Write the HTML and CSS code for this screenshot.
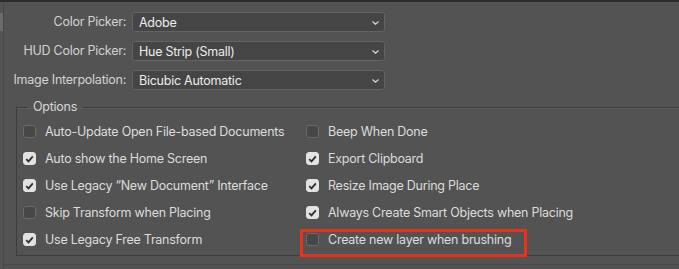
FILE: index.html
```html
<!DOCTYPE html>
<html>
<head>
<meta charset="utf-8">
<link rel="stylesheet" href="styles.css">
</head>
<body>
<div class="topline"></div>
<div class="panel">
  <div class="scrollstub"></div>
  <div class="content">
    <div class="fields">
      <label class="lbl">Color Picker:</label>
      <div class="select"><span>Adobe</span><svg class="chev" width="7" height="4" viewBox="0 0 7 4"><path d="M0.5 0.5 L3.5 3.2 L6.5 0.5" fill="none" stroke="#d8d8d8" stroke-width="1.2"/></svg></div>
      <label class="lbl">HUD Color Picker:</label>
      <div class="select"><span>Hue Strip (Small)</span><svg class="chev" width="7" height="4" viewBox="0 0 7 4"><path d="M0.5 0.5 L3.5 3.2 L6.5 0.5" fill="none" stroke="#d8d8d8" stroke-width="1.2"/></svg></div>
      <label class="lbl">Image Interpolation:</label>
      <div class="select"><span>Bicubic Automatic</span><svg class="chev" width="7" height="4" viewBox="0 0 7 4"><path d="M0.5 0.5 L3.5 3.2 L6.5 0.5" fill="none" stroke="#d8d8d8" stroke-width="1.2"/></svg></div>
    </div>
    <fieldset class="options">
      <legend>Options</legend>
      <div class="grid">
        <div class="item"><span class="box"></span>Auto-Update Open File-based Documents</div>
        <div class="item"><span class="box"></span>Beep When Done</div>
        <div class="item"><span class="box on"><svg width="9" height="8" viewBox="0 0 9 8"><path d="M1.2 4.2 L3.5 6.4 L7.8 1.4" fill="none" stroke="#2e2e2e" stroke-width="1.8"/></svg></span>Auto show the Home Screen</div>
        <div class="item"><span class="box on"><svg width="9" height="8" viewBox="0 0 9 8"><path d="M1.2 4.2 L3.5 6.4 L7.8 1.4" fill="none" stroke="#2e2e2e" stroke-width="1.8"/></svg></span>Export Clipboard</div>
        <div class="item"><span class="box on"><svg width="9" height="8" viewBox="0 0 9 8"><path d="M1.2 4.2 L3.5 6.4 L7.8 1.4" fill="none" stroke="#2e2e2e" stroke-width="1.8"/></svg></span>Use Legacy “New Document” Interface</div>
        <div class="item"><span class="box on"><svg width="9" height="8" viewBox="0 0 9 8"><path d="M1.2 4.2 L3.5 6.4 L7.8 1.4" fill="none" stroke="#2e2e2e" stroke-width="1.8"/></svg></span>Resize Image During Place</div>
        <div class="item"><span class="box"></span>Skip Transform when Placing</div>
        <div class="item"><span class="box on"><svg width="9" height="8" viewBox="0 0 9 8"><path d="M1.2 4.2 L3.5 6.4 L7.8 1.4" fill="none" stroke="#2e2e2e" stroke-width="1.8"/></svg></span>Always Create Smart Objects when Placing</div>
        <div class="item"><span class="box on"><svg width="9" height="8" viewBox="0 0 9 8"><path d="M1.2 4.2 L3.5 6.4 L7.8 1.4" fill="none" stroke="#2e2e2e" stroke-width="1.8"/></svg></span>Use Legacy Free Transform</div>
        <div class="item highlight"><span class="box"></span>Create new layer when brushing</div>
      </div>
    </fieldset>
    <div class="nextline"></div>
  </div>
</div>
</body>
</html>
```

FILE: styles.css
```css
html, body {
  margin: 0;
  padding: 0;
  background: #535353;
  overflow: hidden;
}
body {
  width: 679px;
  height: 269px;
  font-family: Inter, "Noto Sans", "Liberation Sans", sans-serif;
  font-size: 12.5px;
  letter-spacing: -0.25px;
  color: #dcdcdc;
}
.topline {
  height: 2px;
  background: #2a2a2a;
}
.panel {
  display: flex;
  height: 267px;
}
.scrollstub {
  width: 3px;
  flex: none;
  border-right: 1px solid #474747;
  position: relative;
}
.scrollstub::before {
  content: "";
  position: absolute;
  left: 0;
  top: 11px;
  width: 3px;
  height: 18px;
  background: #6b6b6b;
}
.content {
  flex: 1;
  display: flex;
  flex-direction: column;
  padding-top: 10px;
  overflow: hidden;
}
.fields {
  display: grid;
  grid-template-columns: 118px 253px;
  column-gap: 6px;
  row-gap: 9px;
  align-items: center;
  padding-left: 4px;
}
.lbl {
  text-align: right;
  color: #d2d2d2;
  white-space: nowrap;
  line-height: 20px;
}
.select {
  height: 18px;
  border: 1px solid #636363;
  border-radius: 3px;
  background: #454545;
  display: flex;
  align-items: center;
  justify-content: space-between;
  padding: 0 5px 0 6px;
  color: #ececec;
}
.chev {
  margin-top: 1px;
}
.options {
  margin: 9px -40px 0 12px;
  padding: 3px 0 2px 6px;
  border: 0;
  border-top: 1px solid #3d3d3d;
  border-left: 1px solid #3d3d3d;
  border-bottom: 1px solid #3d3d3d;
  box-shadow: inset 0 1px 0 #5c5c5c;
  min-width: 0;
}
.options legend {
  margin-left: 4px;
  padding: 0 6px;
  line-height: 16px;
  color: #d6d6d6;
}
.grid {
  display: grid;
  grid-template-columns: 283px auto;
  grid-auto-rows: 27px;
}
.item {
  display: flex;
  align-items: center;
  gap: 9px;
  height: 27px;
  white-space: nowrap;
  color: #dcdcdc;
}
.box {
  width: 11px;
  height: 11px;
  border: 1px solid #6a6a6a;
  border-radius: 3px;
  background: #474747;
  display: flex;
  align-items: center;
  justify-content: center;
  flex: none;
}
.box.on {
  background: #e2e2e2;
  border-color: #e2e2e2;
}
.highlight {
  position: relative;
}
.highlight::after {
  content: "";
  position: absolute;
  left: -6px;
  top: 3px;
  width: 221px;
  height: 22px;
  border: 3px solid #e8321c;
}
.nextline {
  margin-top: 8px;
  height: 1px;
  background: #4a4a4a;
}
```
